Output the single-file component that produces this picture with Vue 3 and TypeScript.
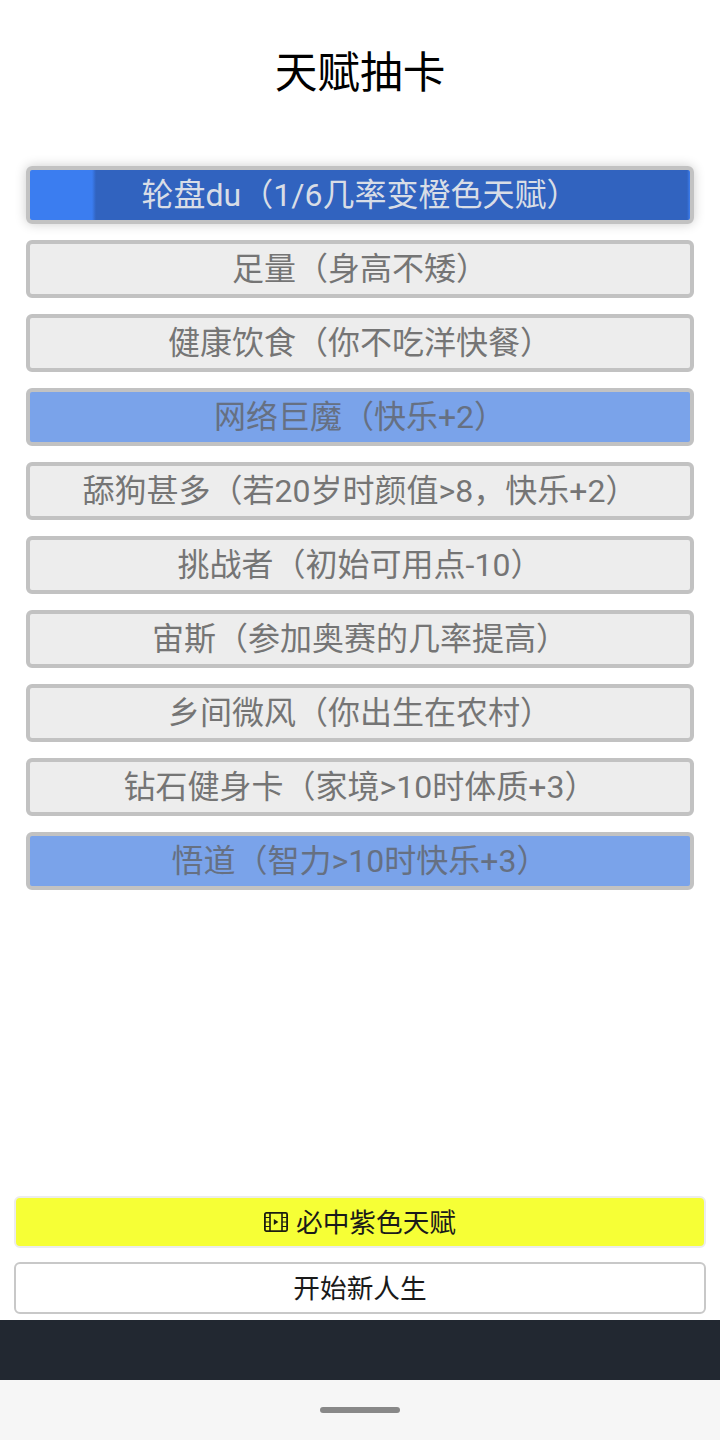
<script setup lang="ts">
interface Talent { label: string; kind: '' | 'blue' | 'roulette' }
const talents: Talent[] = [
  { label: '轮盘du（1/6几率变橙色天赋）', kind: 'roulette' },
  { label: '足量（身高不矮）', kind: '' },
  { label: '健康饮食（你不吃洋快餐）', kind: '' },
  { label: '网络巨魔（快乐+2）', kind: 'blue' },
  { label: '舔狗甚多（若20岁时颜值>8，快乐+2）', kind: '' },
  { label: '挑战者（初始可用点-10）', kind: '' },
  { label: '宙斯（参加奥赛的几率提高）', kind: '' },
  { label: '乡间微风（你出生在农村）', kind: '' },
  { label: '钻石健身卡（家境>10时体质+3）', kind: '' },
  { label: '悟道（智力>10时快乐+3）', kind: 'blue' },
]
</script>

<template>
  <div class="page">
    <h1 class="title">天赋抽卡</h1>
    <ul class="list">
      <li v-for="t in talents" :key="t.label" class="item" :class="t.kind">
        <span class="item-text">{{ t.label }}</span>
      </li>
    </ul>
    <div class="actions">
      <button class="btn ad">
        <svg class="film" viewBox="0 0 24 20" width="24" height="20" fill="none" stroke="#1c1c10" stroke-width="1.8">
          <rect x="0.9" y="0.9" width="22.2" height="18.2" rx="1.5" />
          <path d="M6 1v18M18 1v18" stroke-width="1.6" />
          <path d="M1 5.5h5M1 10h5M1 14.5h5M18 5.5h5M18 10h5M18 14.5h5" stroke-width="1.1" />
          <path d="M9.8 7l4.6 3-4.6 3z" fill="#1c1c10" stroke="none" />
        </svg>
        <span>必中紫色天赋</span>
      </button>
      <button class="btn start">开始新人生</button>
    </div>
    <div class="dark-bar"></div>
    <div class="nav-bar"><span class="handle"></span></div>
  </div>
</template>

<style scoped>
.page {
  width: 720px;
  height: 1440px;
  display: flex;
  flex-direction: column;
  background: #fff;
  font-family: Roboto, "Noto Sans CJK SC", sans-serif;
  overflow: hidden;
}
.title {
  margin: 0;
  padding-top: 46px;
  height: 120px;
  box-sizing: border-box;
  font-size: 42.67px;
  line-height: 54px;
  font-weight: 400;
  text-align: center;
  color: #000;
}
.list {
  list-style: none;
  margin: 0;
  padding: 46px 26px 0;
  display: flex;
  flex-direction: column;
  gap: 16px;
  flex: 1;
}
.item {
  height: 58px;
  box-sizing: border-box;
  border: 4px solid #c2c2c2;
  border-radius: 6px;
  background: #ededed;
  color: #757575;
  font-size: 32px;
  display: flex;
  align-items: center;
  justify-content: center;
  white-space: nowrap;
}
.item-text { line-height: 50px; }
.item.blue { background: #7aa3ea; color: #667082; }
.item.roulette {
  background: linear-gradient(90deg, #3b7df0 0, #3b7df0 62px, #3163bf 66px, #3163bf calc(100% - 3px), #3b7df0 100%);
  color: #d8dde6;
  box-shadow: 0 0 12px rgba(0, 0, 0, 0.2);
}
.actions {
  padding: 0 14px 6px;
  display: flex;
  flex-direction: column;
  gap: 14px;
}
.btn {
  height: 52px;
  box-sizing: border-box;
  border-radius: 6px;
  font-family: inherit;
  font-size: 26.67px;
  color: #1a1a1a;
  padding: 0 0 3px;
  display: flex;
  align-items: center;
  justify-content: center;
  gap: 8px;
}
.ad { background: #f6ff36; border: 2px solid #ececec; }
.start { background: #fff; border: 2px solid #c8c8c8; }
.film { margin-top: 2px; }
.dark-bar { height: 60px; background: #222831; }
.nav-bar {
  height: 60px;
  background: #f6f6f6;
  display: flex;
  justify-content: center;
  padding-top: 27px;
  box-sizing: border-box;
}
.handle { width: 80px; height: 6px; border-radius: 3px; background: #888; }
</style>
